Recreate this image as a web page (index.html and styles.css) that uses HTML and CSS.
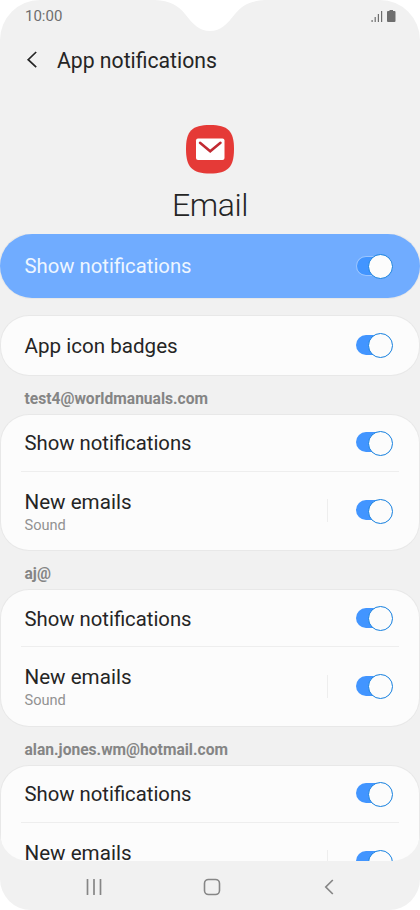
FILE: index.html
```html
<!DOCTYPE html>
<html lang="en">
<head>
<meta charset="utf-8">
<title>App notifications</title>
<link rel="stylesheet" href="styles.css">
</head>
<body>
<div class="screen">
  <svg class="notch" width="110" height="32" viewBox="0 0 110 32"><path d="M0 0C15 1 23 5 30 14C38 24 44 31 55 31C66 31 72 24 80 14C87 5 95 1 110 0Z" fill="#fff"/></svg>
  <header class="status">
    <span>10:00</span>
    <svg width="26" height="14" viewBox="0 0 26 14" fill="#6e6e6e"><path d="M.5 11h1.200v2H.5zM3.600 8h1.200v5H3.600zM6.800 5H8v8H6.800zM10 2h1.200v11H10z"/><path d="M18.500 1h3.500v1h1.500q1 0 1 1v9q0 1-1 1H17q-1 0-1-1V3q0-1 1-1h1.500z"/></svg>
  </header>
  <div class="titlebar">
    <svg width="12" height="18" viewBox="0 0 12 18"><path d="M10.200 1L2.200 8.700l8 7.500" fill="none" stroke="#252525" stroke-width="1.700"/></svg>
    <h1>App notifications</h1>
  </div>
  <section class="app">
    <svg width="50" height="50" viewBox="0 0 50 50"><path d="M25 1C43 1 49 7 49 25S43 49.500 25 49.500 1 43 1 25 7 1 25 1Z" fill="#e53a37"/><rect x="11" y="14.500" width="28.500" height="21.500" rx="2" fill="#fff"/><path d="M15 18.700L25.200 27.300 35.500 18.700" fill="none" stroke="#c12a32" stroke-width="2.500" stroke-linecap="round"/></svg>
    <h2>Email</h2>
  </section>
  <main class="list">
    <div class="card primary"><div class="row"><span class="show">Show notifications</span><i class="toggle"></i></div></div>
    <div class="card single"><div class="row"><span class="badges">App icon badges</span><i class="toggle"></i></div></div>
    <h3>test4@worldmanuals.com</h3>
    <div class="card">
      <div class="row first"><span class="show">Show notifications</span><i class="toggle"></i></div>
      <div class="row detail"><div class="text"><span>New emails</span><small>Sound</small></div><b class="divider"></b><i class="toggle"></i></div>
    </div>
    <h3>aj@</h3>
    <div class="card">
      <div class="row first"><span class="show">Show notifications</span><i class="toggle"></i></div>
      <div class="row detail"><div class="text"><span>New emails</span><small>Sound</small></div><b class="divider"></b><i class="toggle"></i></div>
    </div>
    <h3>alan.jones.wm@hotmail.com</h3>
    <div class="card">
      <div class="row first"><span class="show">Show notifications</span><i class="toggle"></i></div>
      <div class="row detail"><div class="text"><span>New emails</span></div><b class="divider"></b><i class="toggle"></i></div>
    </div>
  </main>
  <nav class="nav">
    <svg width="16" height="16" viewBox="0 0 16 16"><path d="M1.500.5v15M8 .5v15M14.500.5v15" stroke="#868686" stroke-width="1.700" stroke-linecap="round"/></svg>
    <svg class="home" width="18" height="18" viewBox="0 0 18 18"><rect x="1.500" y="1.500" width="15" height="15" rx="4" fill="none" stroke="#868686" stroke-width="1.600"/></svg>
    <svg width="10" height="16" viewBox="0 0 10 16"><path d="M8.800 1L1.800 8l7 7" fill="none" stroke="#868686" stroke-width="1.700"/></svg>
  </nav>
</div>
</body>
</html>
```

FILE: styles.css
```css
* { box-sizing: border-box; }
body { margin: 0; background: #fff; font-family: Roboto, sans-serif; color: #252525; }
h1, h2, h3 { margin: 0; font-weight: 400; }
svg { display: block; flex: none; }
.screen { position: relative; width: 420px; height: 910px; overflow: hidden; display: flex; flex-direction: column; background: #f1f1f1; border-radius: 40px 40px 31px 31px; }
.notch { position: absolute; left: 155px; top: 0; }
.status { height: 32px; padding: 0 23px 0 25px; display: flex; align-items: center; justify-content: space-between; font-size: 15px; color: #6e6e6e; }
.titlebar { height: 56px; padding-left: 26px; display: flex; align-items: center; gap: 19px; }
.titlebar h1 { font-size: 21.2px; }
.app { height: 146px; padding-top: 36px; display: flex; flex-direction: column; align-items: center; }
.app h2 { margin-top: 10px; font-size: 32px; line-height: 42px; font-weight: 300; letter-spacing: -0.4px; }
.list { height: 627px; overflow: hidden; border-radius: 0 0 28px 28px; }
.card { height: 135.5px; margin: 0 1px; background: #fcfcfc; border-radius: 28px; box-shadow: 0 0 0 1px #e8e8e8; }
.primary { height: 64px; margin: 0 0 18px; background: #70acff; color: #eef6ff; border-radius: 32px; }
.single { height: 58.5px; }
.row { height: 100%; margin: 0 20px; padding: 0 6px 0 3.5px; display: flex; align-items: center; justify-content: space-between; font-size: 20.6px; line-height: 24px; }
.primary .row { margin: 0 21px; }
.row.first { height: 57px; border-bottom: 1px solid #eee; }
.row.detail { height: 78.5px; }
.show { font-size: 20.3px; padding-top: 1px; }
.primary .show { padding-top: 0; }
.badges { padding-top: 2px; }
.text { display: flex; flex-direction: column; flex: 1; align-self: flex-start; padding-top: 18px; }
small { font-size: 14.6px; line-height: 20px; margin-top: 1px; color: #929292; }
.divider { width: 1px; height: 23px; margin-right: 28px; background: #eee; }
.toggle { position: relative; top: -0.5px; width: 37px; height: 20px; border-radius: 10px; background: linear-gradient(90deg, #4295ff 26px, transparent 26px); }
.primary .toggle { box-shadow: inset 1px 0 #9bc5ff, inset 0 1px #9bc5ff, inset 0 -1px #9bc5ff; }
.toggle::after { content: ""; position: absolute; right: 0; top: -1.5px; width: 23px; height: 23px; background: #fcfcfc; border: 1px solid #1680df; border-radius: 50%; }
h3 { height: 40px; padding: 0 24.5px; line-height: 49px; font-size: 15.6px; font-weight: 700; color: #858585; }
.nav { height: 49px; padding: 3px 86px 0; display: flex; align-items: center; justify-content: space-between; }
.home { margin-right: 3px; }
```
